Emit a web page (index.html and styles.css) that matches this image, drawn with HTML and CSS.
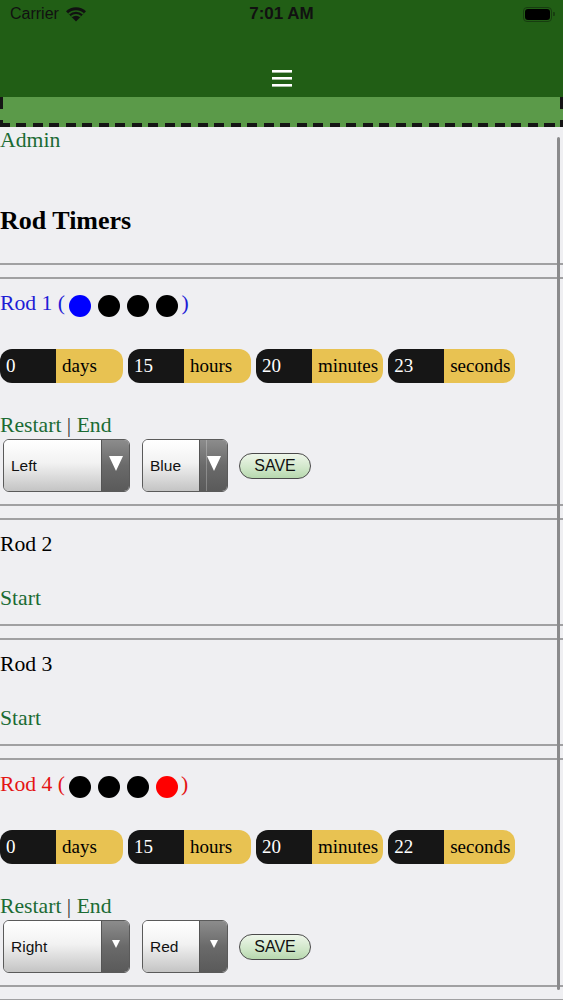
FILE: index.html
```html
<!DOCTYPE html>
<html lang="en">
<head>
  <meta charset="UTF-8" />
  <meta name="viewport" content="width=device-width, initial-scale=1.0"/>
  <title>Rod Timers</title>
  <link rel="stylesheet" href="styles.css">
</head>
<body>
  <header class="topbar">
    <div class="statusbar">
      <span class="carrier">Carrier
        <svg class="wifi" width="22" height="16" viewBox="0 0 22 16">
          <path d="M11 15.5 L1 5.2 A14.5 14.5 0 0 1 21 5.2 Z" fill="#111"/>
          <path d="M3.6 7.9 A10.8 10.8 0 0 1 18.4 7.9" stroke="#215e15" stroke-width="1.6" fill="none"/>
          <path d="M6.3 10.7 A7 7 0 0 1 15.7 10.7" stroke="#215e15" stroke-width="1.6" fill="none"/>
        </svg>
      </span>
      <span class="clock">7:01 AM</span>
      <span class="battery"><span class="battery-level"></span></span>
    </div>
    <div class="menu-row">
      <svg class="menu-icon" width="20" height="17" viewBox="0 0 20 17">
        <rect x="0" y="0" width="20" height="2.6" fill="#fff"/>
        <rect x="0" y="7" width="20" height="2.6" fill="#fff"/>
        <rect x="0" y="14" width="20" height="2.6" fill="#fff"/>
      </svg>
    </div>
  </header>
  <div class="subnav"></div>

  <a class="admin-link" href="#">Admin</a>

  <div class="title-block">
    <h2>Rod Timers</h2>
  </div>

  <!-- Rod 1 -->
  <div class="rod">
    <div class="rod-name blue">Rod 1 (<span class="dot blue-dot"></span><span class="dot"></span><span class="dot"></span><span class="dot"></span>)</div>
    <div class="timers">
      <div class="timer"><span class="timer-num">0</span><span class="timer-unit">days</span></div>
      <div class="timer"><span class="timer-num">15</span><span class="timer-unit">hours</span></div>
      <div class="timer"><span class="timer-num">20</span><span class="timer-unit">minutes</span></div>
      <div class="timer"><span class="timer-num">23</span><span class="timer-unit">seconds</span></div>
    </div>
    <div class="action"><a href="#">Restart</a> <span class="sep">|</span> <a href="#">End</a></div>
    <div class="controls">
      <div class="picker picker-side"><span class="picker-value">Left</span><span class="picker-arrow"><span class="tri"></span></span></div>
      <div class="picker picker-color"><span class="picker-value">Blue</span><span class="picker-arrow split"><span class="tri"></span></span></div>
      <button class="save-btn">SAVE</button>
    </div>
  </div>

  <!-- Rod 2 -->
  <div class="rod">
    <div class="rod-name">Rod 2</div>
    <div class="action"><a href="#">Start</a></div>
  </div>

  <!-- Rod 3 -->
  <div class="rod">
    <div class="rod-name">Rod 3</div>
    <div class="action"><a href="#">Start</a></div>
  </div>

  <!-- Rod 4 -->
  <div class="rod">
    <div class="rod-name red">Rod 4 (<span class="dot"></span><span class="dot"></span><span class="dot"></span><span class="dot red-dot"></span>)</div>
    <div class="timers">
      <div class="timer"><span class="timer-num">0</span><span class="timer-unit">days</span></div>
      <div class="timer"><span class="timer-num">15</span><span class="timer-unit">hours</span></div>
      <div class="timer"><span class="timer-num">20</span><span class="timer-unit">minutes</span></div>
      <div class="timer"><span class="timer-num">22</span><span class="timer-unit">seconds</span></div>
    </div>
    <div class="action"><a href="#">Restart</a> <span class="sep">|</span> <a href="#">End</a></div>
    <div class="controls">
      <div class="picker picker-side"><span class="picker-value">Right</span><span class="picker-arrow"><span class="tri small"></span></span></div>
      <div class="picker picker-color"><span class="picker-value">Red</span><span class="picker-arrow"><span class="tri small"></span></span></div>
      <button class="save-btn">SAVE</button>
    </div>
  </div>

  <div class="rod"></div>

  <!-- indicateur de defilement -->
  <div class="scroll-indicator"></div>
</body>
</html>
```

FILE: styles.css
```css
body {
  font-family: "Liberation Serif", "Times New Roman", serif;
  font-size: 21.7px;
  background-color: #efeff2;
  color: #000;
  margin: 0;
  padding: 0;
  overflow: hidden;
}

a {
  color: #1b6b34;
  text-decoration: none;
}

/* Barre du haut */
.topbar {
  background-color: #215e15;
  height: 97px;
}

.statusbar {
  display: grid;
  grid-template-columns: 1fr auto 1fr;
  align-items: center;
  height: 28px;
  padding: 0 10px;
  font-family: "Liberation Sans", Arial, sans-serif;
  font-size: 16px;
  color: #111;
}

.carrier {
  display: flex;
  align-items: center;
  gap: 6px;
}

.clock {
  font-size: 17px;
  font-weight: bold;
}

.battery {
  justify-self: end;
  position: relative;
  width: 25px;
  height: 11px;
  border: 1px solid #173d10;
  border-radius: 4px;
  padding: 1px;
  margin-right: 1px;
}

.battery::after {
  content: "";
  position: absolute;
  right: -4px;
  top: 4px;
  width: 2px;
  height: 4px;
  background: #173d10;
  border-radius: 0 1px 1px 0;
}

.battery-level {
  display: block;
  height: 100%;
  background: #000;
  border-radius: 3px;
}

.menu-row {
  display: flex;
  justify-content: center;
  padding-top: 42px;
}

/* Bandeau vert clair, bordure pointillee */
.subnav {
  height: 30px;
  background:
    repeating-linear-gradient(90deg, #151515 0 10px, transparent 10px 16.5px) left bottom / 100% 4px no-repeat,
    linear-gradient(#151515 0 12px, transparent 12px 23px, #151515 23px) left top / 3px 100% no-repeat,
    linear-gradient(#151515 0 12px, transparent 12px 23px, #151515 23px) right top / 3px 100% no-repeat,
    #5b9a49;
}

.admin-link {
  display: block;
  line-height: 23px;
  margin-top: 2px;
  width: max-content;
}

.title-block {
  border-bottom: 2px solid #a0a0a2;
}

.title-block h2 {
  font-size: 26px;
  line-height: 28px;
  margin: 55px 0 28px;
}

/* Rods */
.rod {
  border-top: 2px solid #a0a0a2;
  border-bottom: 2px solid #a0a0a2;
  margin-top: 12px;
  padding: 12px 0;
}

.rod-name {
  line-height: 23px;
  padding-top: 1px;
  margin-bottom: -1px;
}

.rod-name.blue { color: #1c1cd6; }
.rod-name.red { color: #e41414; }

.dot {
  display: inline-block;
  width: 22px;
  height: 22px;
  border-radius: 50%;
  background: #000;
  margin: 0 3.5px;
  vertical-align: -7px;
}

.blue-dot { background: #0000ff; margin-left: 4px; }
.red-dot { background: #ff0000; }

.timers {
  display: flex;
  gap: 5px;
  margin-top: 33px;
}

.timer {
  display: flex;
  height: 34px;
  line-height: 34px;
  border-radius: 12px;
  overflow: hidden;
  font-size: 19px;
}

.timer-num {
  width: 50px;
  padding-left: 6px;
  background: #161616;
  color: #fff;
}

.timer-unit {
  min-width: 56px;
  padding: 0 5px 0 6px;
  background: #e8c252;
}

.action {
  line-height: 23px;
  margin-top: 32px;
  margin-bottom: -1px;
  padding-bottom: 3px;
}

.rod .timers + .action {
  margin-top: 31px;
  margin-bottom: -2px;
  padding-bottom: 0;
}

.sep {
  color: #333;
}

.controls {
  display: flex;
  align-items: center;
  margin-top: 4px;
  padding-left: 3px;
}

.picker {
  display: flex;
  height: 53px;
  box-sizing: border-box;
  border: 1.5px solid #5a5a5a;
  border-radius: 6px;
  overflow: hidden;
  font-family: "Liberation Sans", Arial, sans-serif;
  font-size: 15.5px;
  color: #111;
}

.picker-side { width: 127px; }
.picker-color { width: 86px; margin-left: 12px; }

.picker-value {
  flex: 1;
  display: flex;
  align-items: center;
  padding-left: 7px;
  background: linear-gradient(#ffffff, #f2f2f2 45%, #c4c4c4);
}

.picker-arrow {
  width: 28px;
  display: flex;
  justify-content: center;
  padding-top: 16px;
  box-sizing: border-box;
  background: linear-gradient(#8c8c8c, #6a6a6a 50%, #5a5a5a);
  border-left: 1px solid #555;
}

.picker-arrow.split {
  background: linear-gradient(90deg, transparent 6px, rgba(255,255,255,0.25) 6px, rgba(255,255,255,0.25) 7px, transparent 7px),
              linear-gradient(#8c8c8c, #6a6a6a 50%, #5a5a5a);
}

.tri {
  width: 0;
  height: 0;
  border-left: 7.5px solid transparent;
  border-right: 7.5px solid transparent;
  border-top: 15px solid #fff;
}

.tri.small {
  border-left-width: 4.5px;
  border-right-width: 4.5px;
  border-top-width: 8px;
  margin-top: 3px;
}

.save-btn {
  margin-left: 11px;
  width: 72px;
  height: 26px;
  border: 1px solid #4a4a4a;
  border-radius: 13px;
  background: linear-gradient(#eef6ea, #cfe6c8 60%, #b7d8ae);
  font-family: "Liberation Sans", Arial, sans-serif;
  font-size: 16px;
  color: #111;
  padding: 0;
}

.scroll-indicator {
  position: fixed;
  right: 3px;
  top: 137px;
  width: 3px;
  height: 853px;
  background: #8a8a8c;
  border-radius: 2px;
}
```
